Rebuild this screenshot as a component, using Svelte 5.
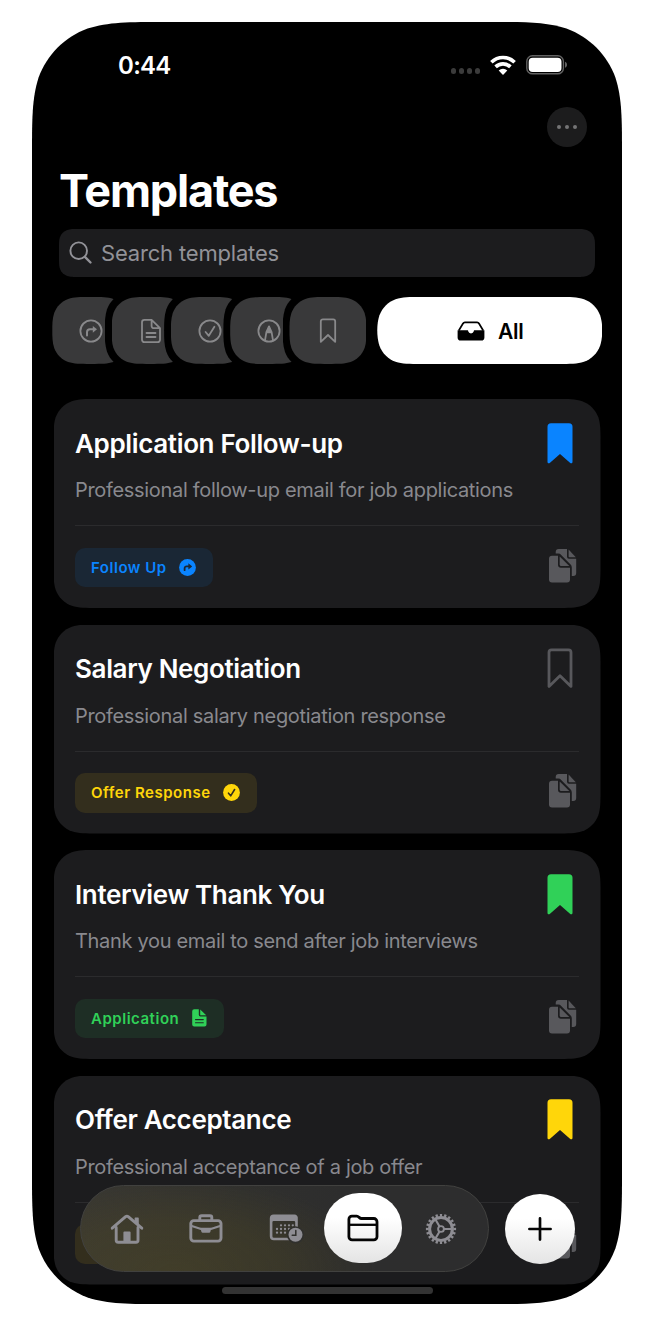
<script>
  // Outline of a rectangle with continuous (squircle-like) corners.
  function smooth(w, h, r) {
    const k = Math.min(r, w / 3.06, h / 2.02);
    const ex = Math.min(1.5287 * k, w / 2);
    const ey = Math.min(1.5287 * k, h / 2);
    const p = (n) => +(n * k).toFixed(2);
    const a = p(0.6315), b = p(0.0749), c = p(0.3728), d = p(0.1691), e = p(0.8684);
    const fx = Math.min(p(1.0885), ex), fy = Math.min(p(1.0885), ey);
    return `path("M${ex} 0H${w - ex}C${w - fx} 0 ${w - e} 0 ${w - a} ${b}C${w - c} ${d} ${w - d} ${c} ${w - b} ${a}C${w} ${e} ${w} ${fy} ${w} ${ey}V${h - ey}C${w} ${h - fy} ${w} ${h - e} ${w - b} ${h - a}C${w - d} ${h - c} ${w - c} ${h - d} ${w - a} ${h - b}C${w - e} ${h} ${w - fx} ${h} ${w - ex} ${h}H${ex}C${fx} ${h} ${e} ${h} ${a} ${h - b}C${c} ${h - d} ${d} ${h - c} ${b} ${h - a}C0 ${h - e} 0 ${h - fy} 0 ${h - ey}V${ey}C0 ${fy} 0 ${e} ${b} ${a}C${d} ${c} ${c} ${d} ${a} ${b}C${e} 0 ${fx} 0 ${ex} 0Z")`;
  }

  const filters = ['arrow', 'doc', 'check', 'pen', 'bookmark'];
  const tabs = ['home', 'briefcase', 'calendar', 'folder', 'gear'];
  const cards = [
    { title: 'Application Follow-up', text: 'Professional follow-up email for job applications', tag: 'Follow Up', tone: 'blue', icon: 'arrow', mark: '#0a84ff' },
    { title: 'Salary Negotiation', text: 'Professional salary negotiation response', tag: 'Offer Response', tone: 'yellow', icon: 'check', mark: null },
    { title: 'Interview Thank You', text: 'Thank you email to send after job interviews', tag: 'Application', tone: 'green', icon: 'doc', mark: '#30d158' },
    { title: 'Offer Acceptance', text: 'Professional acceptance of a job offer', tag: 'Offer Response', tone: 'yellow', icon: 'check', mark: '#ffd60a' }
  ];
</script>

{#snippet filterIcon(name)}
  <svg class="line" width="24" height="26" viewBox="0 0 24 26">
    {#if name === 'arrow'}
      <circle cx="12" cy="13" r="10.6" />
      <path d="M8 17.5v-3.2a3 3 0 0 1 3-3h4" stroke-width="2" />
      <path class="solid" d="M13.8 8l4.2 3.3-4.2 3.4z" />
    {:else if name === 'doc'}
      <path d="M12.6 1.8H5.4a2.4 2.4 0 0 0-2.4 2.4v17.6a2.4 2.4 0 0 0 2.4 2.4h13.2a2.4 2.4 0 0 0 2.4-2.4V10.2zM12.6 1.8v6.2a2.2 2.2 0 0 0 2.2 2.2H21M7.5 15h9M7.5 19h9" />
    {:else if name === 'check'}
      <circle cx="12" cy="13" r="10.6" /><path d="M7.6 14l3.2 3.8 5.6-9" />
    {:else if name === 'pen'}
      <circle cx="12" cy="13" r="10.6" />
      <path d="M8 22.4l1.4-8.2L12 8.4l2.6 5.8 1.4 8.2M9.4 14.4h5.2" />
      <path class="solid" d="M12 8l2.6 6.4H9.4z" />
    {:else}
      <path d="M4.8 23.8V3.4a2 2 0 0 1 2-2h10.4a2 2 0 0 1 2 2v20.4L12 17z" />
    {/if}
  </svg>
{/snippet}

{#snippet tagIcon(name)}
  {#if name === 'doc'}
    <svg width="15" height="18" viewBox="0 0 15 18">
      <path fill="currentColor" d="M2.2.2h4.6v5.6a1.6 1.6 0 0 0 1.6 1.6h6.1v8.2a2 2 0 0 1-2 2H2.2a2 2 0 0 1-2-2V2.2a2 2 0 0 1 2-2zM8.2.5l6 5.8H8.8a.6.6 0 0 1-.6-.6z" />
      <path class="cut" d="M3.5 10.6h7.8M3.5 13.8h7.8" stroke-width="1.1" />
    </svg>
  {:else}
    <svg width="17" height="17" viewBox="0 0 17 17">
      <circle cx="8.5" cy="8.5" r="8.4" fill="currentColor" />
      {#if name === 'check'}
        <path class="cut" d="M5.5 9.2l2.2 2.6 3.9-6.3" stroke-width="1.6" />
      {:else}
        <path class="cut" d="M5.6 11.2V9.4a2 2 0 0 1 2-2h3" stroke-width="1.8" />
        <path class="cutfill" d="M9.4 4.3l3.8 3.1-3.8 3.1z" />
      {/if}
    </svg>
  {/if}
{/snippet}

{#snippet tabIcon(name)}
  {#if name === 'home'}
    <svg class="tabline" width="34" height="30" viewBox="0 0 34 30">
      <path d="M2.2 14.2L15.6 2.7a2 2 0 0 1 2.600 0l13.600 11.500" />
      <path d="M6.200 13.500v12.700a2 2 0 0 0 2 2h17.800a2 2 0 0 0 2-2V13.500" />
      <path class="solid" d="M24.600 4.400a.8.8 0 0 1 .8-.8h2.600a.8.8 0 0 1 .8.8v7.300l-4.200-3.400zM13.400 28V18.500a1 1 0 0 1 1-1h5.200a1 1 0 0 1 1 1V28z" />
    </svg>
  {:else if name === 'briefcase'}
    <svg class="tabline" width="34" height="30" viewBox="0 0 34 30">
      <rect x="1.800" y="6.600" width="30.200" height="20.500" rx="3" />
      <path d="M10.800 6V3.600a1.800 1.800 0 0 1 1.800-1.800h8.400a1.800 1.800 0 0 1 1.800 1.800V6" />
      <path d="M2 11.800l10 3.200h9.800l10-3.200" stroke-width="2.100" />
      <path class="solid" d="M11.400 13.800h11l-1 4a1.400 1.400 0 0 1-1.300 1h-6.400a1.400 1.400 0 0 1-1.300-1z" />
    </svg>
  {:else if name === 'calendar'}
    <svg class="tabcal" width="36" height="30" viewBox="0 0 36 30">
      <path class="tabfill" fill-rule="evenodd" d="M4.600.6h20.800a3.400 3.400 0 0 1 3.400 4v12.200h-2.600V8.200a1.200 1.200 0 0 0-1.200-1.200H4.600a1.200 1.200 0 0 0-1.200 1.200v14a1.600 1.600 0 0 0 1.600 1.600h14.400l.9 2.400H4.800A4 4 0 0 1 .8 22.200V4.600a4 4 0 0 1 3.800-4z" />
      {#each [[11.3, 1], [15, 0], [18.7, 0]] as [y, start]}
        {#each [8, 12, 16, 20, 23.8].slice(start, y > 18 ? 3 : 5) as x}
          <circle class="tabfill" cx={x} cy={y} r="1.15" />
        {/each}
      {/each}
      <circle cx="26.5" cy="20.800" r="8.600" fill="#30302d" />
      <circle class="tabfill" cx="26.500" cy="20.800" r="7" />
      <path d="M26.800 16.500v4.700h-3.600" fill="none" stroke="#30302d" stroke-width="1.500" stroke-linecap="round" />
    </svg>
  {:else if name === 'folder'}
    <svg width="32" height="28" viewBox="0 0 32 28" fill="none" stroke="#050505" stroke-width="2.800">
      <path d="M1.900 5.200a3 3 0 0 1 3-3h4.900c2 0 2.600 2.300 4.600 2.300h12.400a3.200 3.200 0 0 1 3.200 3.200v15a3.200 3.200 0 0 1-3.200 3.200H5.100a3.200 3.200 0 0 1-3.200-3.200z" />
      <path d="M2 10.800h28" stroke-width="2.300" />
    </svg>
  {:else}
    <svg class="tabline" width="32" height="32" viewBox="0 0 32 32">
      <circle cx="16" cy="16" r="11.400" stroke-width="3" />
      <circle cx="16" cy="16" r="13.800" stroke-width="2.600" pathLength="100" stroke-dasharray="2.600 2.400" stroke-dashoffset="1.300" />
      <circle cx="16" cy="16" r="2.900" stroke-width="1.900" />
      <path d="M19.200 16h7.500M14.400 13.200L10.600 6.800M14.400 18.800l-3.800 6.400" stroke-width="2.100" />
    </svg>
  {/if}
{/snippet}

<div class="phone" style:clip-path={smooth(590, 1282, 88)}>
  <header class="status">
    <span class="time">0:44</span>
    <span class="cell"><i></i><i></i><i></i><i></i></span>
    <svg class="wifi" width="26" height="19" viewBox="0 0 26 19">
      <g fill="none" stroke="#fff" stroke-width="3.600">
        <path d="M1.400 6.300a16.400 16.400 0 0 1 23.200 0" />
        <path d="M5.600 10.900a10.500 10.500 0 0 1 14.800 0" />
      </g>
      <path d="M13 18.900l-4.300-4.300a6.200 6.200 0 0 1 8.600 0z" fill="#fff" />
    </svg>
    <svg class="battery" width="42" height="20" viewBox="0 0 42 20">
      <rect x=".8" y=".8" width="36.600" height="18" rx="5.600" fill="none" stroke="#626262" stroke-width="1.400" />
      <rect x="2.700" y="2.700" width="32.800" height="14.200" rx="4" fill="#fff" />
      <path d="M39.200 6.800c2.200.8 2.200 5.200 0 6z" fill="#777" />
    </svg>
  </header>

  <div class="toolbar"><button class="more" aria-label="More"><i></i><i></i><i></i></button></div>
  <h1>Templates</h1>

  <div class="search" style:clip-path={smooth(536, 48, 13)}>
    <svg width="24" height="24" viewBox="0 0 24 24" fill="none" stroke="#929298" stroke-width="1.900" stroke-linecap="round">
      <circle cx="9.700" cy="9.700" r="8.300" /><path d="M15.900 15.900l5.600 5.600" stroke-width="2.400" />
    </svg>
    <span>Search templates</span>
  </div>

  <div class="filters">
    {#each filters as name}
      <div class="ring" style:clip-path={smooth(90.6, 80, 33)}>
        <div class="chip" style:clip-path={smooth(77, 67, 29)}>{@render filterIcon(name)}</div>
      </div>
    {/each}
    <div class="all" style:clip-path={smooth(225, 67, 29)}>
      <svg width="28" height="20" viewBox="0 0 28 20">
        <path d="M1.800 9.500L6 2.500a2.200 2.200 0 0 1 1.900-1.100h12.200A2.200 2.200 0 0 1 22 2.500l4.200 7" fill="none" stroke="#000" stroke-width="1.700" />
        <path d="M.6 9.300h9.800c.7 0 .7.4.8 1a2.900 2.900 0 0 0 5.600 0c.1-.6.1-1 .8-1h9.800v7.100a3.100 3.100 0 0 1-3.100 3.100H3.700a3.100 3.100 0 0 1-3.100-3.100z" />
      </svg>
      <span>All</span>
    </div>
  </div>

  <main>
    {#each cards as card}
      <article style:clip-path={smooth(547, 209, 29)}>
        <div class="head">
          <div>
            <h2>{card.title}</h2>
            <p>{card.text}</p>
          </div>
          <svg class="mark" width="26" height="41" viewBox="0 0 26 41">
            {#if card.mark}
              <path fill={card.mark} d="M4 .3h18a3.500 3.500 0 0 1 3.500 3.500v35c0 1.600-1.400 2-2.500 1L13 31 3 39.800c-1.100 1-2.500.6-2.500-1v-35A3.500 3.500 0 0 1 4 .3z" />
            {:else}
              <path fill="none" stroke="#58585c" stroke-width="2.800" stroke-linejoin="round" d="M4.500 1.900h17A2.500 2.500 0 0 1 24 4.400v34L13 27.800 2 38.400v-34a2.500 2.500 0 0 1 2.500-2.500z" />
            {/if}
          </svg>
        </div>
        <div class="foot">
          <span class="tag {card.tone}"><b>{card.tag}</b>{@render tagIcon(card.icon)}</span>
          <svg width="28" height="34" viewBox="0 0 28 34" fill="#58585c">
            <path d="M6.700 4.600V3a3 3 0 0 1 3-3H18v7.800a2 2 0 0 0 2 2h7.200V24a3 3 0 0 1-3 3h-1.400v-8.600a4 4 0 0 0-1.200-2.800l-9.400-9.700a4 4 0 0 0-2.900-1.300z" />
            <path d="M19.600.4l7.200 7.800h-6.400a.8.8 0 0 1-.8-.8z" />
            <path d="M3 6.800h6v8.900a3 3 0 0 0 3 3h9v11.800a3 3 0 0 1-3 3H3a3 3 0 0 1-3-3V9.800a3 3 0 0 1 3-3z" />
            <path d="M10.700 7.500l9.600 9.500h-8.100a1.500 1.500 0 0 1-1.500-1.500z" />
          </svg>
        </div>
      </article>
    {/each}
  </main>

  <nav class="tabs">
    {#each tabs as name}
      <span class="tab" class:active={name === 'folder'}>{@render tabIcon(name)}</span>
    {/each}
  </nav>
  <button class="add" aria-label="Add">
    <svg width="24" height="24" viewBox="0 0 24 24" stroke="#050505" stroke-width="2.700" stroke-linecap="round"><path d="M12 1.400v21.200M1.400 12h21.200" /></svg>
  </button>
  <div class="indicator"></div>
</div>

<style>
  :global(body) { background: #fff; }
  * { box-sizing: border-box; }
  svg { display: block; flex: none; overflow: visible; }
  button { border: 0; padding: 0; }
  .phone {
    position: relative;
    width: 590px;
    height: 1282px;
    margin: 22px 34px 22px 32px;
    background: #000;
    color: #fff;
    font-family: Inter, "Liberation Sans", sans-serif;
    display: flex;
    flex-direction: column;
    overflow: hidden;
  }
  .status { height: 85px; display: flex; align-items: center; padding: 1px 54px 0 86px; }
  .time { flex: 1; font-size: 24px; font-weight: 600; letter-spacing: -0.7px; }
  .cell { display: flex; gap: 2.500px; padding-top: 12px; margin-right: 10px; }
  .cell i { width: 5.500px; height: 5.500px; border-radius: 50%; background: #3b3b3b; }
  .wifi { margin-right: 10px; }
  .toolbar { display: flex; justify-content: flex-end; padding-right: 35px; }
  .more {
    width: 40px; height: 40px; border-radius: 50%; background: #1c1c1d;
    display: flex; align-items: center; justify-content: center; gap: 4px;
  }
  .more i { width: 4px; height: 4px; border-radius: 50%; background: #747475; }
  h1 { margin: 0; height: 82px; padding: 3px 0 0 27px; font-size: 45px; line-height: 82px; font-weight: 700; letter-spacing: -1.200px; }
  .search {
    width: 536px; height: 48px; margin-left: 27px; padding-left: 10px; background: #1c1c1e;
    display: flex; align-items: center; gap: 8px; color: #929298; font-size: 22px; letter-spacing: -0.180px;
  }
  .filters { display: flex; align-items: center; height: 67px; margin: 20px 0 35px 13.500px; }
  .ring { flex: none; width: 90.600px; height: 80px; padding: 6.500px 6.800px; background: #000; }
  .ring + .ring { margin-left: -31.300px; }
  .chip { width: 77px; height: 67px; background: #39393a; display: flex; align-items: center; justify-content: center; padding-left: 1px; }
  .line { fill: none; stroke: #89898b; stroke-width: 1.800; stroke-linecap: round; stroke-linejoin: round; }
  .line .solid { fill: #89898b; stroke: none; }
  .all {
    flex: none; width: 225px; height: 67px; margin-left: 4px; background: #fff; color: #000; padding: 1px 0 0 1px;
    display: flex; align-items: center; justify-content: center; gap: 13px; font-size: 21px; font-weight: 600; letter-spacing: -0.300px;
  }
  main { display: flex; flex-direction: column; gap: 16.500px; padding-left: 21.500px; }
  article { flex: none; width: 547px; height: 209px; background: #1c1c1e; padding: 0 21.500px; }
  .head { height: 127px; border-bottom: 1px solid #2b2b2d; display: flex; justify-content: space-between; }
  h2 { margin: 28.600px 0 0; font-size: 26px; line-height: 32px; font-weight: 600; letter-spacing: -0.350px; white-space: nowrap; }
  p { margin: 17.600px 0 0; font-size: 20px; line-height: 26px; color: #89898e; letter-spacing: -0.320px; white-space: nowrap; }
  .mark { margin: 23.500px 6.500px 0 0; }
  .foot { display: flex; justify-content: space-between; padding: 21.800px 2.300px 0 0; }
  .foot > svg { margin-top: 1.200px; }
  .tag { height: 39.400px; border-radius: 10px; padding: 0 17px 0 16px; display: flex; align-items: center; gap: 12.500px; }
  .tag b { font-size: 15px; font-weight: 600; letter-spacing: 0.520px; }
  .blue { color: #0a84ff; background: #1a2735; --tag: #1a2735; }
  .yellow { color: #ffd60a; background: #332e1d; --tag: #332e1d; }
  .green { color: #30d158; background: #1e2e25; --tag: #1e2e25; }
  .cut { fill: none; stroke: var(--tag); stroke-linecap: round; stroke-linejoin: round; }
  .cutfill { fill: var(--tag); }
  .tabs {
    position: absolute; left: 47.500px; top: 1163px; width: 409.500px; height: 86.500px;
    border-radius: 44px; border: 1px solid #41413f; padding: 0 7.500px;
    display: flex; align-items: center;
    background:
      radial-gradient(ellipse 200px 95px at 95px 86px, rgba(92, 82, 28, 0.340), rgba(92, 82, 28, 0.230) 55%, rgba(92, 82, 28, 0)),
      linear-gradient(90deg, #373632, #30302e 40%, #2d2d2d 65%, #2d2d2e);
  }
  .tab { width: 78.500px; height: 70px; display: flex; align-items: center; justify-content: center; }
  .tab:not(.active) { padding-top: 1px; }
  .active { border-radius: 35px; }
  .active, .add { background: linear-gradient(#fff 35%, #e4e4e4); }
  .tabline { fill: none; stroke: #8e8d93; stroke-width: 2.900; stroke-linecap: round; stroke-linejoin: round; }
  .tabline circle { stroke-linecap: butt; }
  .tabline .solid { stroke: none; fill: #8e8d93; }
  .tabcal { margin-left: 6px; }
  .tabfill { fill: #8e8d93; }
  .add {
    position: absolute; left: 473px; top: 1171.500px; width: 70px; height: 70px; border-radius: 50%;
    display: flex; align-items: center; justify-content: center;
  }
  .indicator { position: absolute; left: 190px; top: 1265px; width: 211px; height: 6.500px; border-radius: 4px; background: #333; }
</style>
